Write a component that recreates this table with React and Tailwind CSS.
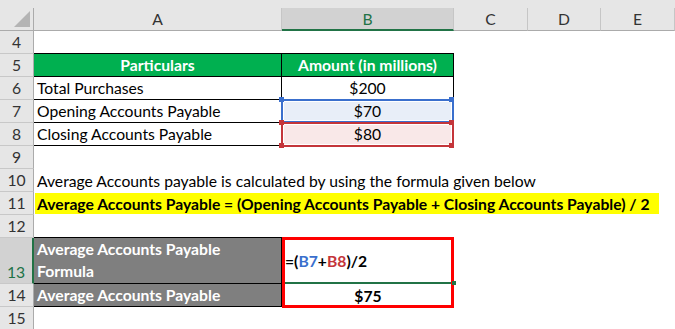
import React from "react";

function Row({ n, h = "h-[23px]", active = false, children }) {
  return (
    <div className={`flex ${h}`}>
      <div
        className={
          active
            ? "w-[34px] shrink-0 flex items-end justify-center pb-[2px] bg-[#d2d2d2] text-[#217346] border-b border-b-[#c8c8c8] border-r-2 border-r-[#217346]"
            : "w-[34px] shrink-0 flex items-end justify-center pb-[2px] bg-[#e6e6e6] text-[#333] border-b border-b-[#c8c8c8] border-r border-r-[#ababab]"
        }
      >
        {n}
      </div>
      {children}
    </div>
  );
}

function Corner({ x, y, c }) {
  return <div className={`absolute w-[5px] h-[5px] ${c}`} style={{ left: x, top: y }} />;
}

export default function App() {
  return (
    <div className="relative w-[675px] h-[329px] overflow-hidden bg-white font-['Lato',sans-serif] text-[15.7px] leading-[18px] text-black">
      {/* column header */}
      <div className="flex h-[31px] bg-[#e6e6e6]">
        <div className="w-[34px] mt-[8px] h-[23px] border-r border-b border-[#ababab] relative">
          <svg className="absolute left-[14px] top-[3px]" width="16" height="16" viewBox="0 0 16 16">
            <polygon points="16,0 16,16 0,16" fill="#b4b4b4" />
          </svg>
        </div>
        <div className="w-[248px] mt-[8px] h-[23px] border-r border-r-[#c6c6c6] border-b border-b-[#ababab] flex items-center justify-center text-[#333]">A</div>
        <div className="w-[172px] mt-[8px] h-[23px] bg-[#d2d2d2] border-r border-r-[#c6c6c6] border-b-2 border-b-[#217346] flex items-center justify-center text-[#217346]">B</div>
        <div className="w-[74px] mt-[8px] h-[23px] border-r border-r-[#c6c6c6] border-b border-b-[#ababab] flex items-center justify-center text-[#333]">C</div>
        <div className="w-[73px] mt-[8px] h-[23px] border-r border-r-[#c6c6c6] border-b border-b-[#ababab] flex items-center justify-center text-[#333]">D</div>
        <div className="flex-1 mt-[8px] h-[23px] border-r border-r-[#c6c6c6] border-b border-b-[#ababab] flex items-center justify-center text-[#333]">E</div>
      </div>

      {/* row 4 */}
      <Row n="4">
        <div className="w-[248px] border-b border-black" />
        <div className="w-[172px] border-b border-black" />
      </Row>
      {/* row 5 */}
      <Row n="5">
        <div className="w-[248px] bg-[#00b050] border-r border-b border-black flex items-end justify-center pb-[2px] text-white font-bold">Particulars</div>
        <div className="w-[172px] bg-[#00b050] border-r border-b border-black flex items-end justify-center pb-[2px] text-white font-bold">Amount (in millions)</div>
      </Row>
      {/* row 6 */}
      <Row n="6">
        <div className="w-[248px] border-r border-b border-black flex items-end pl-[3px] pb-[2px]">Total Purchases</div>
        <div className="w-[172px] border-r border-b border-black flex items-end justify-center pb-[2px]">$200</div>
      </Row>
      {/* row 7 */}
      <Row n="7">
        <div className="w-[248px] border-r border-b border-black flex items-end pl-[3px] pb-[2px]">Opening Accounts Payable</div>
        <div className="w-[172px] bg-[#e8eef8] border-r border-b border-black flex items-end justify-center pb-[2px]">$70</div>
      </Row>
      {/* row 8 */}
      <Row n="8">
        <div className="w-[248px] border-r border-b border-black flex items-end pl-[3px] pb-[2px]">Closing Accounts Payable</div>
        <div className="w-[172px] bg-[#f9e8e8] border-r border-b border-black flex items-end justify-center pb-[2px]">$80</div>
      </Row>
      {/* row 9 */}
      <Row n="9" />
      {/* row 10 */}
      <Row n="10">
        <div className="flex items-end pl-[3px] pb-[2px] whitespace-nowrap">
          Average Accounts payable is calculated by using the formula given below
        </div>
      </Row>
      {/* row 11 */}
      <Row n="11">
        <div className="ml-[1px] w-[624px] self-end mb-[1px] h-[21px] bg-[#ffff00] flex items-end pl-[2px] pb-[1px] font-bold whitespace-nowrap">
          Average Accounts Payable = (Opening Accounts Payable + Closing Accounts Payable) / 2
        </div>
      </Row>
      {/* row 12 */}
      <Row n="12">
        <div className="w-[248px] border-b border-black" />
        <div className="w-[172px] border-b border-[#217346]" />
      </Row>
      {/* row 13 */}
      <Row n="13" h="h-[46px]" active>
        <div className="w-[248px] bg-[#7f7f7f] border-r border-b border-black flex items-end pl-[3px] pb-[1px] text-white font-bold leading-[22px]">
          Average Accounts Payable
          <br />
          Formula
        </div>
        <div className="w-[172px] border-b-2 border-[#217346] flex items-center pl-[3px] pt-[1px] font-bold">
          =(<span className="text-[#3a6fcd]">B7</span>+<span className="text-[#c4353a]">B8</span>)/2
        </div>
      </Row>
      {/* row 14 */}
      <Row n="14">
        <div className="w-[248px] bg-[#7f7f7f] border-r border-b border-black flex items-end pl-[3px] pb-[2px] text-white font-bold">Average Accounts Payable</div>
        <div className="w-[172px] flex items-end justify-center pb-[2px] font-bold">$75</div>
      </Row>
      {/* row 15 */}
      <Row n="15" />

      {/* formula reference highlights */}
      <div className="absolute left-[281px] top-[99px] w-[173px] h-[24px] border-2 border-[#3a6fcd] shadow-[inset_0_0_0_1px_white]" />
      <div className="absolute left-[281px] top-[122px] w-[173px] h-[25px] border-2 border-[#c4353a] shadow-[inset_0_0_0_1px_white]" />
      <Corner x={279} y={97} c="bg-[#3a6fcd]" />
      <Corner x={449} y={97} c="bg-[#3a6fcd]" />
      <Corner x={279} y={120} c="bg-[#c4353a]" />
      <Corner x={449} y={120} c="bg-[#c4353a]" />
      <Corner x={279} y={143} c="bg-[#c4353a]" />
      <Corner x={449} y={143} c="bg-[#c4353a]" />

      {/* red highlight box */}
      <div className="absolute left-[282px] top-[237px] w-[172px] h-[71px] border-[3px] border-[#ff0000]" />
      <div className="absolute left-[452px] top-[281px] w-[4px] h-[4px] bg-[#217346]" />
    </div>
  );
}
